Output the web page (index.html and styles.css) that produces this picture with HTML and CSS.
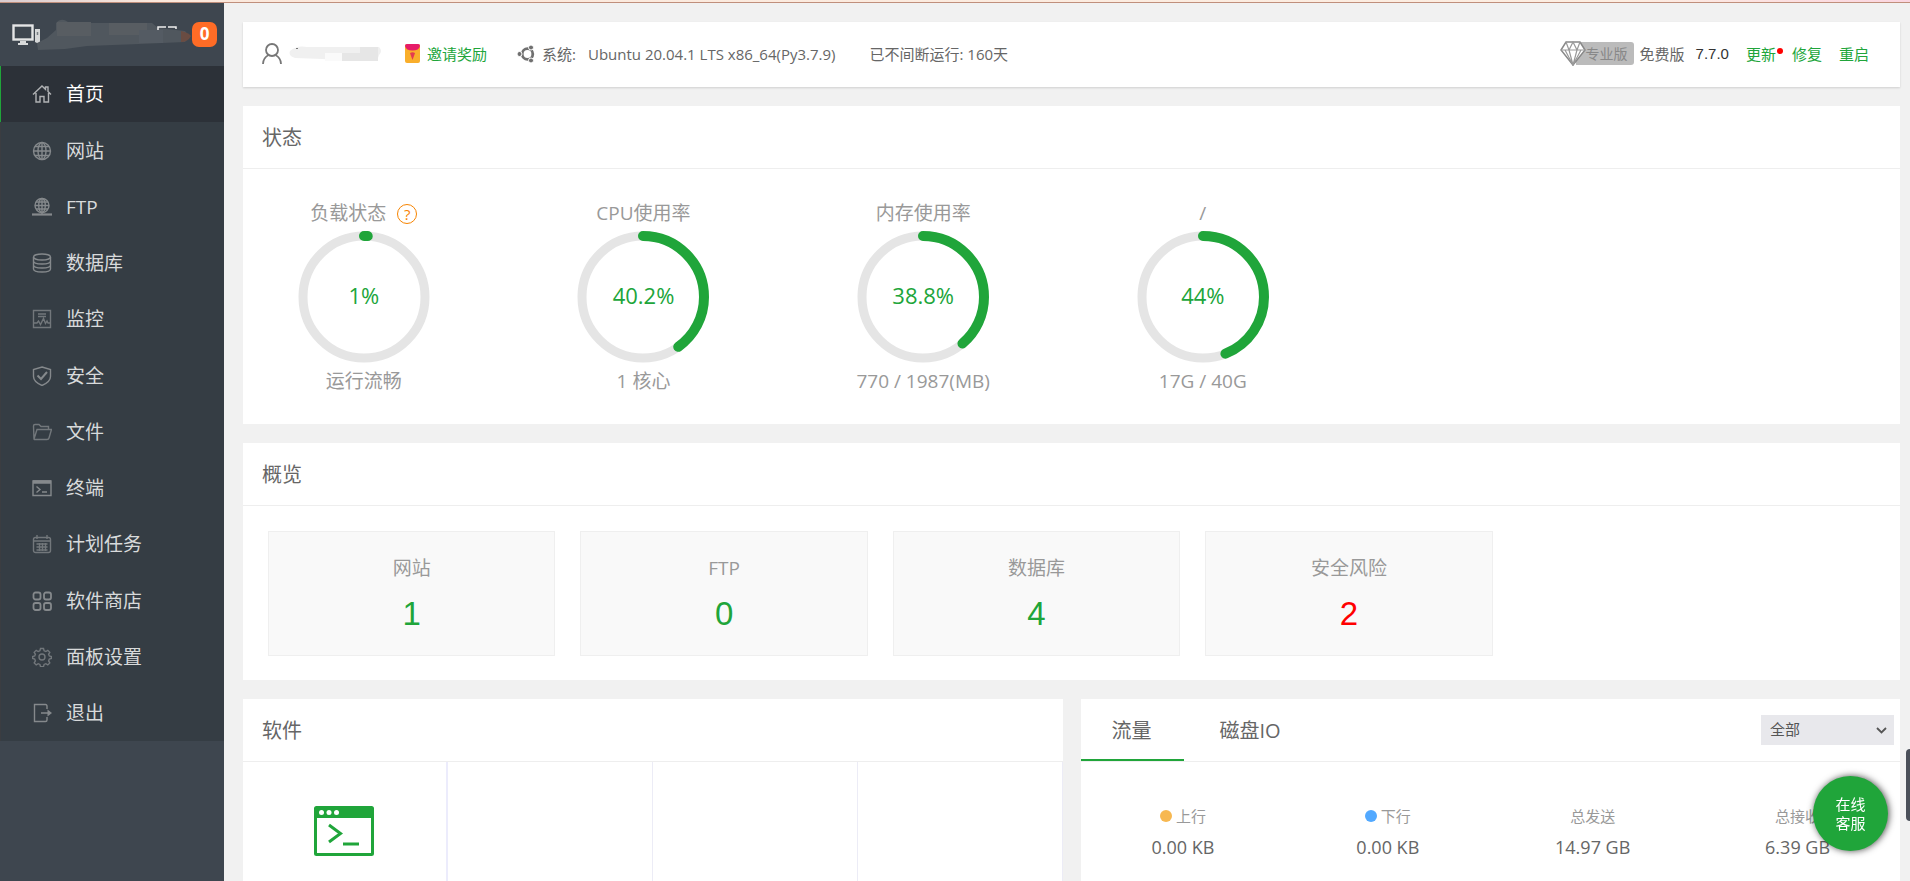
FILE: index.html
```html
<!DOCTYPE html>
<html lang="zh-CN">
<head>
<meta charset="utf-8">
<title>首页</title>
<link rel="stylesheet" href="styles.css">
</head>
<body>
<div class="top-strip"></div>
<div class="layout">
  <aside class="sidebar">
    <div class="brand">
      <svg class="brand-icon" width="28" height="22" viewBox="0 0 28 22"><rect x="1.500" y="1.500" width="19" height="14" fill="none" stroke="#e4e5e6" stroke-width="2.400"/><path d="M8 17h6v2h2v2H6v-2h2z" fill="#d8dadb"/><path d="M23 5h5v14h-3l-2-1z" fill="#d5d7d8"/><path d="M25.500 8v3" stroke="#777d82" stroke-width="1.500"/></svg>
      <svg class="brand-mask" width="152" height="34" viewBox="0 0 152 34"><path d="M0 25L10 20L19 12V5Q24-1 31 4L34 9L37 5H115L121 10L148 13Q154 19 148 24L102 26L50 28L28 31L1 32z" fill="#50575e"/><path d="M20 4h34v14H20zM72 5h38v12H72z" fill="#585d62"/><path d="M102 12h24v13h-24z" fill="#545b63"/><path d="M144 13q8 2 10 5q-3 6-10 6z" fill="#6a4c42"/><path d="M121 12V9h8M131 9h8v2" fill="none" stroke="#eee" stroke-width="1.500"/></svg>
      <span class="count">0</span>
    </div>
    <nav>
      <ul class="menu">
        <li><a class="active" href="#"><svg class="ico" viewBox="0 0 20 20"><path d="M1 10.500L10 2l3.500 3.300V3H16v4.500l3 3M4 9v9h4v-5.500h4V18h4.500V9"/></svg>首页</a></li>
        <li><a href="#"><svg class="ico" viewBox="0 0 20 20"><circle cx="10" cy="10" r="8.500"/><ellipse cx="10" cy="10" rx="4" ry="8.500"/><path d="M10 1.500v17M1.500 10h17M3 5.500h14M3 14.500h14"/></svg>网站</a></li>
        <li><a href="#"><svg class="ico" viewBox="0 0 20 20"><circle cx="10" cy="8.500" r="7"/><ellipse cx="10" cy="8.500" rx="3.300" ry="7"/><path d="M10 1.500v16M3 8.500h14M4 5h12M4 12h12"/><path d="M0 17.500h20" stroke-width="2.200"/></svg>FTP</a></li>
        <li><a href="#"><svg class="ico" viewBox="0 0 20 20"><ellipse cx="10" cy="4" rx="8.500" ry="3"/><path d="M1.500 4v12c0 4 17 4 17 0V4M1.500 8c0 4 17 4 17 0M1.500 12c0 4 17 4 17 0"/></svg>数据库</a></li>
        <li><a href="#"><svg class="ico dim" viewBox="0 0 20 20"><path d="M1.500 1.500h17v17h-17zM6 5h8M6 7.500h8M2 14h3l1.500-2 2 3.500 3-6 2 5 1.500-2.500 1 2H18"/></svg>监控</a></li>
        <li><a href="#"><svg class="ico" viewBox="0 0 20 20"><path d="M10 1l8.500 2.500v7c0 4.500-4 7-8.500 9-4.500-2-8.500-4.500-8.500-9v-7z"/><path d="M5.500 9.500l3.500 3.500 6-7" stroke-width="2"/></svg>安全</a></li>
        <li><a href="#"><svg class="ico dim" viewBox="0 0 20 20"><path d="M2 17L1.500 4q0-1.500 1.500-1.500h4l2 2h7.500v3M2 17L5 7.500h14.500L17 16q-.4 1.500-2 1.500H2.500z"/></svg>文件</a></li>
        <li><a href="#"><svg class="ico" viewBox="0 0 20 20"><path d="M1 3h18v14.500H1z"/><path d="M1 4h18" stroke-width="3.500"/><path d="M4.500 8.500L8 11.500l-3.500 3M10 14h5"/></svg>终端</a></li>
        <li><a href="#"><svg class="ico dim" viewBox="0 0 20 20"><rect x="1.500" y="3.500" width="17" height="15" rx="2"/><path d="M5 1v4M15 1v4M2 7h16M4.500 10h11M4.500 13h11M4.500 16h11M7.500 9v8M10.500 9v8M13.500 9v8"/></svg>计划任务</a></li>
        <li><a href="#"><svg class="ico" viewBox="0 0 20 20"><g stroke-width="1.800"><rect x="1.500" y="1.500" width="7" height="7" rx="2"/><rect x="12" y="1.500" width="7" height="7" rx="2"/><rect x="1.500" y="12" width="7" height="7" rx="2"/><rect x="12" y="12" width="7" height="7" rx="2"/></g></svg>软件商店</a></li>
        <li><a href="#"><svg class="ico dim" viewBox="0 0 20 20"><circle cx="10" cy="10" r="3"/><path d="M8.500 1.500h3l.6 2.300 1.700.7 2-1.200 2 2-1.200 2 .7 1.700 2 .5v2l-2 .6-.7 1.800 1.200 2-2 2-2-1.200-1.700.7-.6 2.300h-3l-.6-2.300-1.700-.7-2 1.200-2-2 1.200-2-.7-1.800-2-.6v-2l2-.5.7-1.700-1.200-2 2-2 2 1.200 1.700-.7z"/></svg>面板设置</a></li>
        <li><a href="#"><svg class="ico" viewBox="0 0 20 20"><path d="M15 6V3q0-1.500-1.500-1.500H2.500v17h11q1.500 0 1.500-1.500v-3M9 10h9"/><path d="M15.500 6.500L20 10l-4.500 3.500z" fill="#85898c" stroke="none"/></svg>退出</a></li>
      </ul>
    </nav>
  </aside>

  <main class="main">
    <header class="panel info-bar">
      <svg class="user-icon" width="20" height="21" viewBox="0 0 20 21"><circle cx="10" cy="7" r="6" fill="none" stroke="#777" stroke-width="1.800"/><path d="M1 21c0-4 2-7 5.500-9M19 21c0-4-2-7-5.500-9" fill="none" stroke="#777" stroke-width="1.800"/></svg>
      <svg class="user-mask" width="94" height="16" viewBox="0 0 94 16"><path d="M1 5Q8-1 18 1H90q4 4 0 8l-2 6H50L34 13 6 12Q-1 10 1 5z" fill="#f0f0f0"/><path d="M36 7h17v8H36z" fill="#fafafa"/><path d="M53 7h18v8H53zM71 1h18v14H71z" fill="#e6e6e6"/><path d="M7 2h2v1H7z" fill="#777"/></svg>
      <a class="invite" href="#"><svg width="15" height="19" viewBox="0 0 15 19"><rect width="15" height="19" rx="2" fill="#f9ae2b"/><path d="M0 2q0-2 2-2h11q2 0 2 2-1 4.500-7.500 4.500T0 2z" fill="#e61c68"/><path d="M5 9q2.500-1.500 5 0l-1 3-1.500 4L6 12z" fill="#e33b50"/></svg>邀请奖励</a>
      <svg class="os-icon" width="18" height="18" viewBox="0 0 18 18"><circle cx="10.500" cy="9" r="5.300" fill="none" stroke="#707070" stroke-width="2.800"/><g fill="#707070" stroke="#fff"><circle cx="2.500" cy="9" r="2.500"/><circle cx="14" cy="2.500" r="2.500"/><circle cx="14" cy="15.500" r="2.500"/></g></svg>
      <span>系统:</span>
      <span class="os-name">Ubuntu 20.04.1 LTS x86_64(Py3.7.9)</span>
      <span class="uptime">已不间断运行: 160天</span>
      <div class="version">
        <span class="pro"><svg class="diamond" width="26" height="25" viewBox="0 0 26 25"><path d="M6 1h14l5 8-12 15L1 9z" fill="#fff" stroke="#888" stroke-width="1.500"/><path d="M1 9h24M6 1l3 8 4-8 4 8 3-8M9 9l4 15 4-15M5 9l8 15 8-15" fill="none" stroke="#999" stroke-width="1.200"/></svg>专业版</span>
        <span class="edition">免费版</span>
        <span class="number">7.7.0</span>
        <a class="update" href="#">更新</a>
        <a class="repair" href="#">修复</a>
        <a href="#">重启</a>
      </div>
    </header>

    <section class="panel status">
      <h2>状态</h2>
      <div class="gauges">
        <div class="gauge">
          <h3>负载状态<button class="help" type="button" aria-label="帮助">?</button></h3>
          <div class="ring"><svg viewBox="0 0 132 132"><circle class="track" cx="66" cy="66" r="61"/><circle class="arc" cx="66" cy="66" r="61" pathLength="100" stroke-dasharray="1 99"/></svg><span>1%</span></div>
          <p>运行流畅</p>
        </div>
        <div class="gauge">
          <h3>CPU使用率</h3>
          <div class="ring"><svg viewBox="0 0 132 132"><circle class="track" cx="66" cy="66" r="61"/><circle class="arc" cx="66" cy="66" r="61" pathLength="100" stroke-dasharray="40.2 59.8"/></svg><span>40.2%</span></div>
          <p>1 核心</p>
        </div>
        <div class="gauge">
          <h3>内存使用率</h3>
          <div class="ring"><svg viewBox="0 0 132 132"><circle class="track" cx="66" cy="66" r="61"/><circle class="arc" cx="66" cy="66" r="61" pathLength="100" stroke-dasharray="38.8 61.2"/></svg><span>38.8%</span></div>
          <p>770 / 1987(MB)</p>
        </div>
        <div class="gauge">
          <h3>/</h3>
          <div class="ring"><svg viewBox="0 0 132 132"><circle class="track" cx="66" cy="66" r="61"/><circle class="arc" cx="66" cy="66" r="61" pathLength="100" stroke-dasharray="44 56"/></svg><span>44%</span></div>
          <p>17G / 40G</p>
        </div>
      </div>
    </section>

    <section class="panel overview">
      <h2>概览</h2>
      <div class="cards">
        <a class="card" href="#"><span>网站</span><strong>1</strong></a>
        <a class="card" href="#"><span>FTP</span><strong>0</strong></a>
        <a class="card" href="#"><span>数据库</span><strong>4</strong></a>
        <a class="card risk" href="#"><span>安全风险</span><strong>2</strong></a>
      </div>
    </section>

    <div class="bottom">
      <section class="panel software">
        <h2>软件</h2>
        <div class="apps">
          <div class="app"><svg width="60" height="50" viewBox="0 0 60 50"><rect x="1.500" y="1.500" width="57" height="47" rx="1" fill="#fff" stroke="#20a53a" stroke-width="3"/><path d="M1 1h58v11H1z" fill="#20a53a"/><g fill="#fff"><circle cx="7.500" cy="6.500" r="2.500"/><circle cx="15" cy="6.500" r="2.500"/><circle cx="22.500" cy="6.500" r="2.500"/></g><path d="M15 19l11.500 8.500L15 36M29 38h16" fill="none" stroke="#20a53a" stroke-width="3"/></svg></div>
          <div class="app"></div><div class="app"></div><div class="app"></div>
        </div>
      </section>
      <section class="panel network">
        <div class="tabs">
          <button class="tab on" type="button">流量</button>
          <button class="tab" type="button">磁盘IO</button>
          <select class="iface" aria-label="网卡"><option>全部</option></select>
        </div>
        <dl class="stats">
          <div><dt><i class="dot up"></i>上行</dt><dd>0.00 KB</dd></div>
          <div><dt><i class="dot down"></i>下行</dt><dd>0.00 KB</dd></div>
          <div><dt>总发送</dt><dd>14.97 GB</dd></div>
          <div><dt>总接收</dt><dd>6.39 GB</dd></div>
        </dl>
      </section>
    </div>
  </main>
</div>
<button class="chat" type="button">在线<br>客服</button>
<div class="side-handle"></div>
</body>
</html>
```

FILE: styles.css
```css
* { box-sizing: border-box; }
body {
  margin: 0;
  height: 100vh;
  display: flex;
  flex-direction: column;
  overflow: hidden;
  background: #f1f1f1;
  color: #666;
  font: 15px/20px "Open Sans", "Noto Sans CJK SC", sans-serif;
}
h2, h3, p, ul, dl, dd { margin: 0; padding: 0; font-weight: 400; }
a { color: #20a53a; text-decoration: none; }
button, select { font: inherit; border: 0; padding: 0; cursor: pointer; }
svg { flex: none; }

.top-strip {
  flex: none;
  height: 3px;
  background: linear-gradient(90deg, #d9ccd0, #fbe8dc 8%, #fdeee2 85%, #fbd5e0);
  border-bottom: 1px solid #c08f7c;
}
.layout { flex: 1; min-height: 0; display: flex; }

.sidebar { flex: none; width: 224px; background: #3e464f; }
.brand { display: flex; align-items: center; height: 63px; padding: 0 7px 0 12px; }
.brand-icon { margin-right: -6px; }
.brand-mask { flex: 1; }
.count {
  position: relative;
  width: 25px;
  height: 25px;
  border-radius: 7px;
  background: #ff6c26;
  color: #fff;
  font-size: 17px;
  font-weight: 700;
  line-height: 24px;
  text-align: center;
}
.menu { list-style: none; background: #353d44; }
.menu li:nth-child(4n+1) { padding-bottom: 1px; }
.menu a {
  display: flex;
  align-items: center;
  gap: 14px;
  height: 56px;
  padding-left: 31px;
  border-left: 1px solid #3b3d41;
  color: #d8dadb;
  font-size: 19px;
}
.menu a.active { background: #2c3138; border-color: #20a53a; color: #fff; }
.ico { width: 20px; height: 20px; fill: none; stroke: #85898c; stroke-width: 1.4; }
.ico.dim { stroke: #72777b; }
.active .ico { stroke: #b0b2b4; }

.main {
  flex: 1;
  min-width: 0;
  display: flex;
  flex-direction: column;
  gap: 19px;
  padding: 19px 10px 0 19px;
}
.panel { background: #fff; }
.panel h2 {
  height: 63px;
  padding-left: 19px;
  border-bottom: 1px solid #eee;
  font-size: 20px;
  line-height: 64px;
}

.info-bar {
  display: flex;
  align-items: center;
  height: 65px;
  padding: 0 31px 2px 19px;
  box-shadow: 0 1px 2px rgba(0, 0, 0, .14);
  white-space: nowrap;
}
.user-mask { margin: 0 22px 0 7px; }
.invite { display: flex; align-items: center; gap: 7px; margin-right: 30px; }
.os-icon { margin-right: 7px; }
.os-name { margin-left: 12px; }
.uptime { margin-left: 34px; }
.version { display: flex; align-items: center; margin-left: auto; }
.pro {
  display: flex;
  align-items: center;
  height: 23px;
  padding-right: 6px;
  border-radius: 3px;
  background: linear-gradient(90deg, transparent 16px, #bbb 16px);
  color: #888;
  font-size: 14px;
}
.edition { margin-left: 6px; }
.number { margin: 0 17px 0 11px; color: #333; font-family: "Liberation Sans", sans-serif; }
.update { position: relative; margin-right: 16px; }
.update::after {
  content: "";
  position: absolute;
  top: 4px;
  right: -7px;
  width: 6px;
  height: 6px;
  border-radius: 50%;
  background: #f00;
}
.repair { margin-right: 17px; }

.gauges {
  display: grid;
  grid-template-columns: repeat(6, 1fr);
  gap: 60px;
  padding: 30px 28px 29px 11px;
}
.gauge { text-align: center; color: #999; }
.gauge h3, .gauge p { font-size: 19px; line-height: 28px; }
.gauge h3 { height: 32px; white-space: nowrap; }
.help {
  width: 20px;
  height: 20px;
  margin-left: 11px;
  border: 1px solid #f78400;
  border-radius: 50%;
  background: none;
  color: #f78400;
  font-size: 15px;
  line-height: 18px;
}
.ring { display: grid; place-items: center; }
.ring > * { grid-area: 1 / 1; }
.ring svg { width: 132px; height: 132px; transform: rotate(-90deg); }
.ring circle { fill: none; }
.track { stroke: #e5e5e5; stroke-width: 9; }
.arc { stroke: #20a53a; stroke-width: 10; stroke-linecap: round; }
.ring span { padding-bottom: 4px; color: #20a53a; font-size: 22px; }
.gauge p { padding-top: 4px; }

.cards {
  display: grid;
  grid-template-columns: repeat(5, 1fr);
  gap: 25px;
  padding: 25px 95px 24px 25px;
}
.card {
  display: flex;
  flex-direction: column;
  align-items: center;
  height: 125px;
  padding-top: 22px;
  border: 1px solid #efefef;
  background: #f9f9f9;
  color: #999;
  font-size: 19px;
  line-height: 28px;
}
.card strong {
  margin-top: 12px;
  color: #20a53a;
  font: 33px/40px "Liberation Sans", sans-serif;
}
.risk strong { color: #f00; }

.bottom { flex: 1; display: grid; grid-template-columns: 1fr 1fr; gap: 18px; }
.software { display: flex; flex-direction: column; }
.apps { flex: 1; display: grid; grid-template-columns: repeat(4, 1fr); }
.app { border-right: 1px solid #ececf6; padding-top: 44px; text-align: center; }
.app:first-child { border-right: 2px solid #ececfc; }

.tabs { display: flex; align-items: center; height: 63px; padding-right: 6px; border-bottom: 1px solid #eee; }
.tab {
  align-self: stretch;
  padding: 4px 32px 0 31px;
  border-bottom: 2px solid transparent;
  background: none;
  color: #666;
  font-size: 20px;
}
.tab.on { border-color: #20a53a; margin-right: 5px; }
.iface {
  appearance: none;
  width: 133px;
  height: 30px;
  margin-left: auto;
  padding: 0 0 2px 9px;
  border-radius: 0;
  color: #555;
  background: #e8e8ec url("data:image/svg+xml,%3Csvg xmlns='http://www.w3.org/2000/svg' width='11' height='7'%3E%3Cpath d='M1 1l4.500 4.500L10 1' fill='none' stroke='%23555' stroke-width='1.800'/%3E%3C/svg%3E") no-repeat right 7px center;
}
.stats { display: grid; grid-template-columns: repeat(4, 1fr); padding-top: 44px; text-align: center; }
.stats dt { display: flex; align-items: center; justify-content: center; gap: 4px; color: #999; }
.stats dd { margin-top: 9px; font-size: 18px; line-height: 24px; }
.dot { width: 12px; height: 12px; border-radius: 50%; }
.up { background: #f7b851; }
.down { background: #52a9ff; }

.chat {
  position: fixed;
  right: 22px;
  bottom: 30px;
  width: 75px;
  height: 75px;
  border-radius: 50%;
  background: #20a53a;
  color: #fff;
  line-height: 19px;
  box-shadow: 1px 0 7px rgba(0, 0, 0, .7);
}
.side-handle {
  position: fixed;
  right: 0;
  bottom: 60px;
  width: 4px;
  height: 72px;
  border-radius: 4px 0 0 4px;
  background: #4a4f59;
}
```
